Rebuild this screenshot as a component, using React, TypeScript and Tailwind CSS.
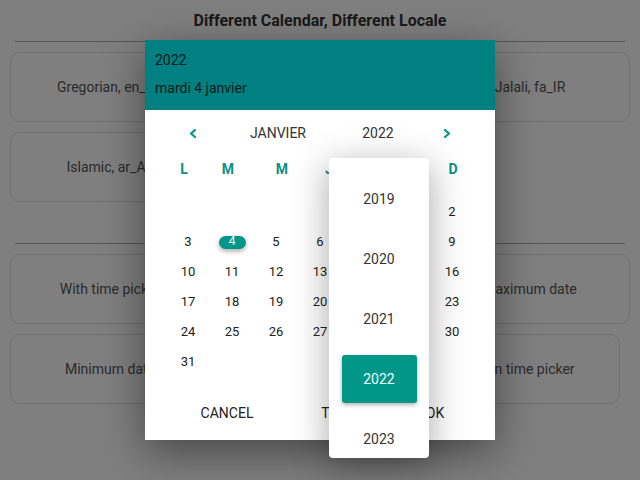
import React from 'react';

const sections = [
  {
    title: 'Different Calendar, Different Locale',
    cards: ['Gregorian, en_US', 'Persian, fa_IR', 'Jalali, fa_IR', 'Islamic, ar_AE', 'Indian, hi_IN'],
  },
  {
    title: 'Other Examples',
    cards: ['With time picker', 'Range picker', 'Maximum date', 'Minimum date', 'Multiple dates', 'Join time picker'],
  },
];

const weekDays = [
  { label: 'L', shift: '-translate-x-[4px]' },
  { label: 'M', shift: '-translate-x-[4px]' },
  { label: 'M', shift: 'translate-x-[6px]' },
  { label: 'J', shift: 'translate-x-[9px]' },
  { label: 'V', shift: 'translate-x-[6px]' },
  { label: 'S', shift: 'translate-x-[3px]' },
  { label: 'D', shift: 'translate-x-[1px]' },
];

const days: (number | null)[] = [
  null, null, null, null, null, 1, 2,
  ...Array.from({ length: 29 }, (_, i) => i + 3),
];

const years = [2019, 2020, 2021, 2022, 2023];

function Chevron({ dir }: { dir: 'left' | 'right' }) {
  return (
    <svg width="8" height="9" viewBox="0 0 8 9" fill="none">
      <polyline
        points={dir === 'left' ? '6,1 2,4.5 6,8' : '2,1 6,4.5 2,8'}
        stroke="#009688"
        strokeWidth="2.2"
        strokeLinecap="round"
        strokeLinejoin="round"
      />
    </svg>
  );
}

function YearList() {
  return (
    <div className="absolute left-[184px] top-[118px] h-[300px] w-[100px] overflow-hidden rounded-[4px] bg-white pt-[11px] shadow-[0_8px_36px_rgba(0,0,0,0.35)]">
      {years.map((y) => (
        <div key={y} className="flex h-[60px] items-center justify-center">
          {y === 2022 ? (
            <span className="flex h-[48px] w-[75px] items-center justify-center rounded-[3px] bg-[#009688] text-[#f0fffd] shadow-[0_2px_4px_rgba(0,0,0,0.3)]">
              {y}
            </span>
          ) : (
            <span className="text-[#333]">{y}</span>
          )}
        </div>
      ))}
    </div>
  );
}

function Calendar() {
  return (
    <div className="absolute left-[145px] top-[40px] h-[400px] w-[350px] bg-white text-sm shadow-[0_12px_40px_rgba(0,0,0,0.45)]">
      <div className="h-[70px] bg-[#008080] px-[10px] pt-[10px] leading-5 text-[#0c1a1a]">
        <div>2022</div>
        <div className="mt-[8px]">mardi 4 janvier</div>
      </div>

      <div className="mt-[11px] flex h-[24px] items-center pl-[38px] text-[#333]">
        <div className="flex w-[20px] justify-center"><Chevron dir="left" /></div>
        <div className="w-[150px] text-center">JANVIER</div>
        <div className="w-[50px] text-center">2022</div>
        <div className="ml-[34px] flex w-[20px] justify-center"><Chevron dir="right" /></div>
      </div>

      <div className="mx-auto mt-[12px] grid h-[24px] w-[308px] grid-cols-7 items-center font-bold text-[#0b8f86]">
        {weekDays.map((d, i) => (
          <div key={i} className={`text-center ${d.shift}`}>{d.label}</div>
        ))}
      </div>

      <div className="mx-auto mt-[16px] grid w-[308px] grid-cols-7 text-[13px] text-[#222]">
        {days.map((d, i) => (
          <div key={i} className="flex h-[30px] items-center justify-center">
            {d === 4 ? (
              <span className="flex h-[13px] w-[27px] items-center justify-center rounded-full bg-[#009688] text-[12px] text-white shadow-[0_2px_5px_rgba(0,0,0,0.35)]">
                4
              </span>
            ) : (
              d
            )}
          </div>
        ))}
      </div>

      <div className="mt-[18px] flex h-[36px] items-center pl-[50px] text-[#222]">
        <div className="w-[64px] text-center">CANCEL</div>
        <div className="ml-[52px] w-[64px] text-center">TODAY</div>
        <div className="ml-[40px] w-[40px] text-center">OK</div>
      </div>

      <YearList />
    </div>
  );
}

export default function App() {
  return (
    <div className="relative h-[480px] w-[640px] overflow-hidden bg-white font-['Roboto',sans-serif]">
      <div className="px-[10px]">
        {sections.map((s, si) => (
          <section key={s.title} className="pt-[9px]">
            <h2 className="text-center text-base font-bold leading-6 text-[#333]">{s.title}</h2>
            <hr className="mx-[5px] mt-[8px] border-t border-[#aaa]" />
            <div className="mt-[10px] grid grid-cols-3 gap-[10px]">
              {s.cards.map((c, ci) => (
                <div
                  key={c}
                  className={`flex h-[70px] items-center justify-center rounded-[10px] border border-[#e0e0e0] text-sm text-[#555] ${
                    si === 1 && ci === 5 ? 'mr-[10px]' : ''
                  }`}
                >
                  {c}
                </div>
              ))}
            </div>
          </section>
        ))}
      </div>

      <div className="absolute inset-0 bg-black/50" />
      <Calendar />
    </div>
  );
}
